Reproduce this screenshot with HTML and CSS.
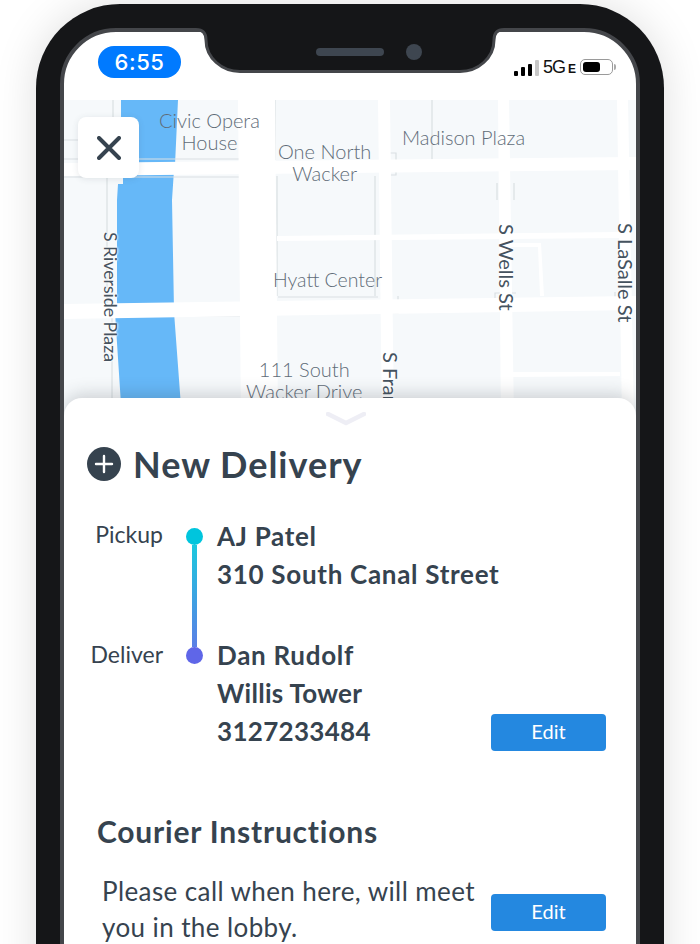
FILE: index.html
```html
<!DOCTYPE html>
<html lang="en">
<head>
<meta charset="utf-8">
<title>New Delivery</title>
<link rel="stylesheet" href="styles.css">
</head>
<body>
<div class="phone">
  <div class="screen">
    <header class="status">
      <div class="time">6:55</div>
      <div class="indicators">
        <div class="bars"><i class="bar b1"></i><i class="bar b2"></i><i class="bar b3"></i><i class="bar b4"></i></div>
        <span class="net">5G</span><span class="net-e">E</span>
        <div class="battery"><i class="charge"></i></div><i class="nub"></i>
      </div>
    </header>
    <div class="map">
      <svg class="map-art" viewBox="64 100 572 320" width="572" height="320" aria-hidden="true">
        <rect x="64" y="100" width="572" height="320" fill="#f6f9fb"/>
        <path d="M121 100H178L175 165H121Z M123 170H174L172 200L174 310H117L117 200L118 184H123Z M115 312H174L182 420H122Z" fill="#66b8f8"/>
        <g fill="none" stroke="#dadfe3" stroke-width="1.2">
          <path d="M113 100V160M64 140H78M64 159H240M64 177H240M107 177V303M112 317V400M64 316H242M242 317V400M275 100V160M277 176V296M278 297H378M432 100V160M375 176V296"/>
          <path d="M380 158V153H396V175H388M497 200V183M514 183V200M375 313H398V296M495 310V293H516M517 310H490M615 292V310"/>
        </g>
        <g fill="#fff">
          <path d="M64 163L636 157V170L64 176Z"/>
          <path d="M64 304L636 296V310L64 319Z"/>
          <path d="M238 100H275L278 420H241Z"/>
          <path d="M378 100H390L394 420H382Z"/>
          <path d="M498 100H509L514 420H501Z"/>
          <path d="M617 100H628L634 420H622Z"/>
          <path d="M277 236L620 232V238L277 241Z"/>
          <path d="M513 372H620V376L513 377Z"/>
          <path d="M505 243H541L544 296H540L538 247H505Z"/>
        </g>
      </svg>
      <span class="place civic">Civic Opera<br>House</span>
      <span class="place one">One North<br>Wacker</span>
      <span class="place madison">Madison Plaza</span>
      <span class="place hyatt">Hyatt Center</span>
      <span class="place south">111 South<br>Wacker Drive</span>
      <span class="street riverside">S Riverside Plaza</span>
      <span class="street wells">S Wells St</span>
      <span class="street lasalle">S LaSalle St</span>
      <span class="street franklin">S Franklin St</span>
      <button class="close" aria-label="Close">
        <svg viewBox="0 0 24 24" width="24" height="24"><path d="M2 2L22 22M22 2L2 22" fill="none" stroke="#36434f" stroke-width="4" stroke-linecap="round"/></svg>
      </button>
    </div>
    <main class="sheet">
      <svg class="chevron" viewBox="0 0 40 14" width="40" height="14" aria-hidden="true"><path d="M2 2L20 11L38 2" fill="none" stroke="#eeeef5" stroke-width="4.5" stroke-linecap="round" stroke-linejoin="round"/></svg>
      <h1 class="title">
        <svg viewBox="0 0 34 34" width="34" height="34" aria-hidden="true"><circle cx="17" cy="17" r="17" fill="#36434f"/><path d="M17 9V25M9 17H25" stroke="#fff" stroke-width="2.4" stroke-linecap="round"/></svg>
        New Delivery
      </h1>
      <section class="route">
        <div class="stop pickup">
          <div class="stop-label">Pickup</div>
          <div class="rail"><i class="dot dot-start"></i><i class="line"></i></div>
          <div class="stop-text"><div>AJ Patel</div><div>310 South Canal Street</div></div>
        </div>
        <div class="stop deliver">
          <div class="stop-label">Deliver</div>
          <div class="rail"><i class="dot dot-end"></i></div>
          <div class="stop-text"><div>Dan Rudolf</div><div class="tight">Willis Tower</div><div class="tight">3127233484</div></div>
          <button class="edit edit-route">Edit</button>
        </div>
      </section>
      <h2 class="subtitle">Courier Instructions</h2>
      <section class="notes">
        <p>Please call when here, will meet you in the lobby.</p>
        <button class="edit">Edit</button>
      </section>
    </main>
  </div>
  <svg class="notch" viewBox="36 4 628 80" width="628" height="80" aria-hidden="true">
    <path d="M196 26H504V29.5C497 29.5 494 33 494 40C494 58 478 71.500 460 71.500H240C222 71.500 206 58 206 40C206 33 203 29.500 196 29.500Z" fill="#151618"/>
    <path d="M196 29.500C203 29.500 206 33 206 40C206 58 222 71.500 240 71.500H460C478 71.500 494 58 494 40C494 33 497 29.500 504 29.500" fill="none" stroke="#44464a" stroke-width="3"/>
    <rect x="316" y="48" width="68" height="8" rx="4" fill="#3e4650"/>
    <circle cx="414" cy="52" r="8" fill="#3e4650"/>
  </svg>
</div>
</body>
</html>
```

FILE: styles.css
```css
* { box-sizing: border-box; }
html, body { margin: 0; height: 944px; overflow: hidden; background: #fff; }
body { font-family: "Lato", "Liberation Sans", sans-serif; color: #36434f; }
h1, h2, p { margin: 0; }

.phone {
  position: relative;
  width: 628px;
  height: 1100px;
  margin: 4px 36px 0;
  padding: 24px 24px 0;
  background: #151618;
  border-radius: 84px;
  box-shadow: 0 0 44px rgba(0, 0, 0, .13);
}
.notch { position: absolute; left: 0; top: 0; }
.screen {
  display: flex;
  flex-direction: column;
  height: 1040px;
  border: 4px solid #44464a;
  border-radius: 56px;
  background: #fff;
  overflow: hidden;
}

/* status bar */
.status {
  flex: none;
  height: 68px;
  display: flex;
  justify-content: space-between;
  align-items: flex-start;
  padding: 14px 20px 0 34px;
}
.time {
  width: 83px;
  height: 32px;
  border-radius: 16px;
  background: #007aff;
  color: #fff;
  font: 500 22px/32px "Inter", "Liberation Sans", sans-serif;
  letter-spacing: .6px;
  text-align: center;
}
.indicators { display: flex; align-items: center; height: 18px; margin-top: 12px; }
.bars { display: flex; align-items: flex-end; gap: 3px; height: 16px; margin-top: 2px; }
.bar { display: block; width: 4px; background: #000; border-radius: 1px; }
.b1 { height: 5px; }
.b2 { height: 9px; }
.b3 { height: 12px; }
.b4 { height: 16px; background: #c8c8c8; }
.net {
  margin-left: 4px;
  font: 400 18px/18px "Liberation Sans", sans-serif;
  letter-spacing: -1px;
  color: #111;
}
.net-e { margin-left: 3px; font: 700 12px/14px "Liberation Sans", sans-serif; color: #111; margin-top: 3px; }
.battery {
  width: 33px;
  height: 16px;
  margin-left: 4px;
  padding: 2px;
  border: 1.5px solid #9a9a9a;
  border-radius: 5px;
}
.charge { display: block; width: 17px; height: 100%; background: #000; border-radius: 3px; }
.nub { display: block; width: 2px; height: 6px; margin-left: 1px; background: #aaa; border-radius: 0 2px 2px 0; }

/* map */
.map { position: relative; flex: none; height: 298px; overflow: visible; }
.map-art { position: absolute; left: 0; top: 0; display: block; }
.place {
  position: absolute;
  font-size: 20px;
  font-weight: 300;
  line-height: 22px;
  color: #5f6c78;
  text-align: center;
  white-space: nowrap;
}
.civic { left: 95px; top: 9px; }
.one { left: 214px; top: 40px; }
.madison { left: 338px; top: 26px; }
.hyatt { left: 209px; top: 169px; font-size: 19.5px; }
.south { left: 182px; top: 258px; }
.street {
  position: absolute;
  writing-mode: vertical-rl;
  font-size: 20px;
  line-height: 20px;
  color: #46535f;
  white-space: nowrap;
  text-shadow: 0 0 2px #fff, 0 0 2px #fff, 0 0 3px #fff;
}
.riverside { left: 36px; top: 132px; font-size: 17.7px; }
.wells { left: 433px; top: 124px; }
.lasalle { left: 552px; top: 123px; }
.franklin { left: 317px; top: 252px; }
.close {
  position: absolute;
  left: 14px;
  top: 17px;
  width: 61px;
  height: 61px;
  padding: 0;
  display: flex;
  align-items: center;
  justify-content: center;
  background: #fff;
  border: 0;
  border-radius: 8px;
  box-shadow: 0 1px 6px rgba(60, 70, 80, .12);
}

/* sheet */
.sheet {
  position: relative;
  flex: 1;
  display: flex;
  flex-direction: column;
  background: #fff;
  border-radius: 18px 18px 0 0;
  box-shadow: 0 -3px 18px rgba(40, 50, 60, .22);
  padding: 0 30px 0 22px;
}
.chevron { align-self: center; margin: 14px 0 0 -1px; flex: none; display: block; }
.title {
  display: flex;
  align-items: center;
  gap: 12px;
  margin: 14px 0 0 1px;
  font-size: 36px;
  font-weight: 700;
  letter-spacing: 1px;
  line-height: 48px;
  height: 48px;
}
.route { margin-top: 29px; }
.stop { display: flex; align-items: flex-start; }
.pickup { height: 119px; }
.stop-label {
  width: 77px;
  margin-top: -2px;
  font-size: 23px;
  line-height: 38px;
  text-align: right;
  flex: none;
}
.deliver .stop-label { margin-top: -1px; }
.rail {
  flex: none;
  width: 46px;
  height: 100%;
  display: flex;
  flex-direction: column;
  align-items: center;
  padding-top: 11px;
  margin: 0 0 0 8px;
}
.dot { display: block; flex: none; width: 17px; height: 17px; border-radius: 50%; }
.dot-start { background: #00c5dd; }
.dot-end { background: #5f66e8; }
.line {
  display: block;
  flex: 1;
  width: 5px;
  margin-bottom: -11px;
  background: linear-gradient(#1cc8de, #5b7fe6);
}
.stop-text {
  flex: 1;
  font-size: 26px;
  font-weight: 700;
  line-height: 38px;
  letter-spacing: .7px;
  white-space: nowrap;
}
.tight { letter-spacing: .3px; }
.deliver { align-items: flex-start; position: relative; }
.edit {
  flex: none;
  width: 115px;
  height: 37px;
  padding: 0 0 2px;
  background: #2488e0;
  border: 0;
  border-radius: 4px;
  color: #fff;
  font: 400 20px/35px "Lato", "Liberation Sans", sans-serif;
}
.edit-route { margin-top: 78px; }
.subtitle {
  margin: 61px 0 0 11px;
  font-size: 30px;
  font-weight: 700;
  line-height: 38px;
  letter-spacing: .8px;
}
.notes { display: flex; justify-content: space-between; align-items: flex-start; margin: 23px 0 0 16px; }
.notes p { width: 380px; font-size: 26px; line-height: 36px; letter-spacing: .4px; }
.notes .edit { margin-top: 21px; }
```
